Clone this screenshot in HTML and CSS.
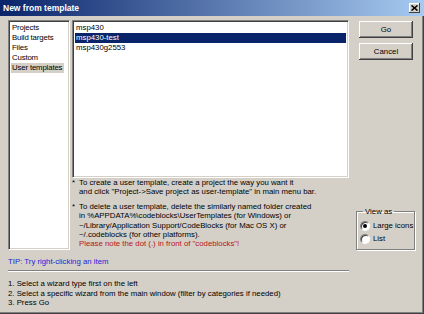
FILE: index.html
```html
<!DOCTYPE html>
<html lang="en">
<head>
    <meta charset="UTF-8">
    <title>New from template</title>
    <link rel="stylesheet" href="styles.css">
</head>
<body>
    <div class="dialog">
        <div class="title-bar">
            <span class="title-text">New from template</span>
            <button class="close-btn">
                <svg width="7" height="6" viewBox="0 0 7 6"><path d="M0.5 0.5 L6.5 5.5 M6.5 0.5 L0.5 5.5" stroke="#000" stroke-width="1.6"/></svg>
            </button>
        </div>

        <div class="dialog-body">
            <div class="main-area">
                <ul class="category-list">
                    <li>Projects</li>
                    <li>Build targets</li>
                    <li>Files</li>
                    <li>Custom</li>
                    <li class="selected">User templates</li>
                </ul>

                <div class="center-column">
                    <ul class="template-list">
                        <li>msp430</li>
                        <li class="selected">msp430-test</li>
                        <li>msp430g2553</li>
                    </ul>
                    <div class="notes">
                        <div class="note">
                            <span class="bullet">*</span>
                            <p>To create a user template, create a project the way you want it<br>and click "Project-&gt;Save project as user-template" in main menu bar.</p>
                        </div>
                        <div class="note">
                            <span class="bullet">*</span>
                            <p>To delete a user template, delete the similarly named folder created<br>in %APPDATA%\codeblocks\UserTemplates (for Windows) or<br>~/Library/Application Support/CodeBlocks (for Mac OS X) or<br>~/.codeblocks (for other platforms).<br><span class="warning">Please note the dot (.) in front of "codeblocks"!</span></p>
                        </div>
                    </div>
                </div>

                <div class="side-column">
                    <div class="buttons">
                        <button class="btn">Go</button>
                        <button class="btn">Cancel</button>
                    </div>
                    <fieldset class="view-as">
                        <legend>View as</legend>
                        <label class="radio"><span class="radio-dot checked"></span>Large icons</label>
                        <label class="radio"><span class="radio-dot"></span>List</label>
                    </fieldset>
                </div>
            </div>

            <p class="tip">TIP: Try right-clicking an item</p>
            <div class="separator"></div>
            <ul class="steps">
                <li>1. Select a wizard type first on the left</li>
                <li>2. Select a specific wizard from the main window (filter by categories if needed)</li>
                <li>3. Press Go</li>
            </ul>
        </div>
    </div>
</body>
</html>
```

FILE: styles.css
```css
:root {
    --face: #d4d0c8;
    --shadow: #808080;
    --dark: #404040;
    --highlight: #ffffff;
    --select: #0a246a;
}

* {
    margin: 0;
    padding: 0;
    box-sizing: border-box;
}

body {
    font-family: 'Liberation Sans', Arial, sans-serif;
    font-size: 7.8px;
    color: #000;
    background-color: var(--face);
}

.dialog {
    width: 424px;
    height: 314px;
    background-color: var(--face);
    box-shadow: inset -1px -1px var(--dark), inset -2px -2px var(--shadow);
}

.title-bar {
    height: 16px;
    display: flex;
    align-items: center;
    justify-content: space-between;
    padding: 0 4px 0 3px;
    background: linear-gradient(to right, #0a246a, #a6caf0);
}

.title-text {
    color: #fff;
    font-weight: bold;
    font-size: 8.5px;
}

.close-btn {
    width: 11px;
    height: 10px;
    display: flex;
    align-items: center;
    justify-content: center;
    background-color: var(--face);
    border: none;
    box-shadow: inset -1px -1px var(--dark), inset 1px 1px var(--highlight);
}

.dialog-body {
    padding: 4px 0 0 8px;
}

.main-area {
    display: flex;
    height: 230px;
}

.category-list,
.template-list {
    list-style: none;
    background-color: #fff;
    border: 1px solid;
    border-color: var(--shadow) var(--highlight) var(--highlight) var(--shadow);
    box-shadow: inset 1px 1px var(--dark), inset -1px -1px var(--face);
}

.category-list {
    width: 62px;
    height: 230px;
    padding: 2px 0 0 2px;
}

.category-list li {
    height: 10px;
    line-height: 10px;
    width: fit-content;
    padding: 0 2px 0 1px;
    letter-spacing: -0.15px;
}

.category-list li.selected {
    background-color: var(--face);
}

.center-column {
    width: 277px;
    margin-left: 2px;
}

.template-list {
    height: 158px;
    padding: 2px;
}

.template-list li {
    height: 10px;
    line-height: 10px;
    padding-left: 1px;
}

.template-list li.selected {
    background-color: var(--select);
    color: #fff;
}

.notes {
    line-height: 9.4px;
}

.note {
    display: flex;
    margin-bottom: 5px;
}

.bullet {
    width: 7px;
}

.warning {
    color: #b81414;
}

.side-column {
    width: 59px;
    margin-left: 7px;
    display: flex;
    flex-direction: column;
    justify-content: space-between;
}

.buttons {
    display: flex;
    flex-direction: column;
    gap: 5px;
    padding: 1px 0 0 3px;
}

.btn {
    width: 54px;
    height: 17px;
    font-family: inherit;
    font-size: 7.8px;
    background-color: var(--face);
    border: none;
    box-shadow: inset -1px -1px var(--dark), inset 1px 1px var(--highlight), inset -2px -2px var(--shadow);
}

.view-as {
    border: 1px solid var(--shadow);
    box-shadow: inset 1px 1px var(--highlight), 1px 1px var(--highlight);
    padding: 3px 0 4px 3px;
    height: 43px;
}

.view-as legend {
    margin-left: 3px;
    padding: 0 2px;
    line-height: 9px;
}

.radio {
    display: flex;
    align-items: center;
    gap: 3px;
    height: 13px;
}

.radio-dot {
    width: 10px;
    height: 10px;
    border-radius: 50%;
    border: 1px solid;
    border-color: var(--shadow) var(--highlight) var(--highlight) var(--shadow);
    box-shadow: inset 1px 1px var(--dark);
    background-color: #fff;
    display: flex;
    align-items: center;
    justify-content: center;
}

.radio-dot.checked::after {
    content: '';
    width: 4px;
    height: 4px;
    border-radius: 50%;
    background-color: #000;
}

.tip {
    color: #2323d8;
    line-height: 9.4px;
    margin-top: 7px;
}

.separator {
    width: 341px;
    margin-top: 4px;
    border-top: 1px solid var(--shadow);
    border-bottom: 1px solid var(--highlight);
}

.steps {
    list-style: none;
    line-height: 9.2px;
    margin-top: 7px;
}
```
